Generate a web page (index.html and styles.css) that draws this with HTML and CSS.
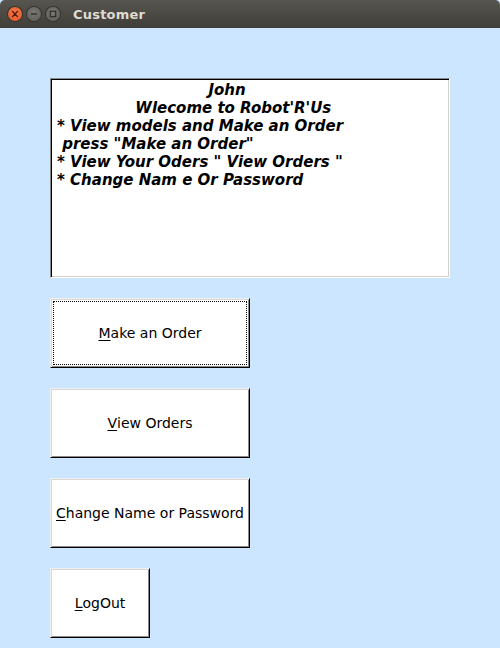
FILE: index.html
```html
<!DOCTYPE html>
<html>
<head>
<meta charset="utf-8">
<link rel="stylesheet" href="styles.css">
</head>
<body>
<div class="window">
  <div class="titlebar">
    <div class="controls">
      <span class="ctl close"><svg width="14" height="14" viewBox="0 0 14 14"><path d="M4.6 4.6 L9.4 9.4 M9.4 4.6 L4.6 9.4" stroke="#5a1a08" stroke-width="1.4" stroke-linecap="round"/></svg></span>
      <span class="ctl"><svg width="14" height="14" viewBox="0 0 14 14"><path d="M4 7 H10" stroke="#2e2d2a" stroke-width="1.4"/></svg></span>
      <span class="ctl"><svg width="14" height="14" viewBox="0 0 14 14"><rect x="4.3" y="4.3" width="5.4" height="5.4" fill="none" stroke="#2e2d2a" stroke-width="1.2"/></svg></span>
    </div>
    <div class="title">Customer</div>
  </div>
  <div class="content">
    <div class="textarea"><pre class="msg">                             John
               Wlecome to Robot'R'Us
* View models and Make an Order
 press "Make an Order"
* View Your Oders " View Orders "
* Change Nam e Or Password</pre></div>
    <button class="btn focused"><span class="focus"><u>M</u>ake an Order</span></button>
    <button class="btn"><span class="focus"><u>V</u>iew Orders</span></button>
    <button class="btn"><span class="focus"><u>C</u>hange Name or Password</span></button>
    <button class="btn small"><span class="focus"><u>L</u>ogOut</span></button>
  </div>
</div>
</body>
</html>
```

FILE: styles.css
```css
html, body {
  margin: 0;
  padding: 0;
  background: #cce6ff;
}
.window {
  width: 500px;
  height: 648px;
  background: #cce6ff;
  overflow: hidden;
}
.titlebar {
  height: 28px;
  background: linear-gradient(#57554f, #403e39);
  border-radius: 5px 5px 0 0;
  display: flex;
  align-items: center;
  padding-left: 8px;
  box-sizing: border-box;
}
.controls {
  display: flex;
  gap: 5px;
}
.ctl {
  width: 14px;
  height: 14px;
  border-radius: 50%;
  background: radial-gradient(circle at 50% 40%, #7c7a74, #5b5953);
  box-shadow: 0 0 0 1px #34332f;
  display: block;
}
.ctl svg { display: block; }
.ctl.close {
  background: radial-gradient(circle at 50% 40%, #f47a4e, #e0511f);
}
.title {
  margin-left: 13px;
  font-family: "DejaVu Sans", sans-serif;
  font-weight: bold;
  font-size: 13px;
  letter-spacing: 0.2px;
  color: #dfdbd2;
}
.content {
  padding: 50px 0 0 50px;
  display: flex;
  flex-direction: column;
  align-items: flex-start;
  gap: 20px;
}
.textarea {
  width: 400px;
  height: 200px;
  box-sizing: border-box;
  background: #fff;
  border-style: solid;
  border-width: 1px;
  border-color: #8a8a8a #fff #fff #8a8a8a;
  box-shadow: inset 1px 1px 0 #000, inset -1px -1px 0 #d4d0c8;
  padding: 2px 6px;
}
.msg {
  margin: 0;
  font-family: "DejaVu Sans", sans-serif;
  font-weight: bold;
  font-style: italic;
  font-size: 15px;
  line-height: 18px;
  color: #000;
}
.btn {
  width: 200px;
  height: 70px;
  box-sizing: border-box;
  background: #fff;
  border-style: solid;
  border-width: 1px;
  border-color: #f0f0f0 #000 #000 #f0f0f0;
  box-shadow: inset 1px 1px 0 #d8d8d8, inset -1px -1px 0 #8a8a8a;
  font-family: "DejaVu Sans", sans-serif;
  font-size: 14px;
  color: #000;
  display: flex;
  align-items: center;
  justify-content: center;
  padding: 2px;
}
.btn.small { width: 100px; }
.focus {
  align-self: stretch;
  flex: 1;
  display: flex;
  align-items: center;
  justify-content: center;
  border: 1px dotted transparent;
  white-space: nowrap;
}
.btn.focused .focus {
  border-color: #000;
}
u { text-decoration-thickness: 1px; text-underline-offset: 2px; }
```
